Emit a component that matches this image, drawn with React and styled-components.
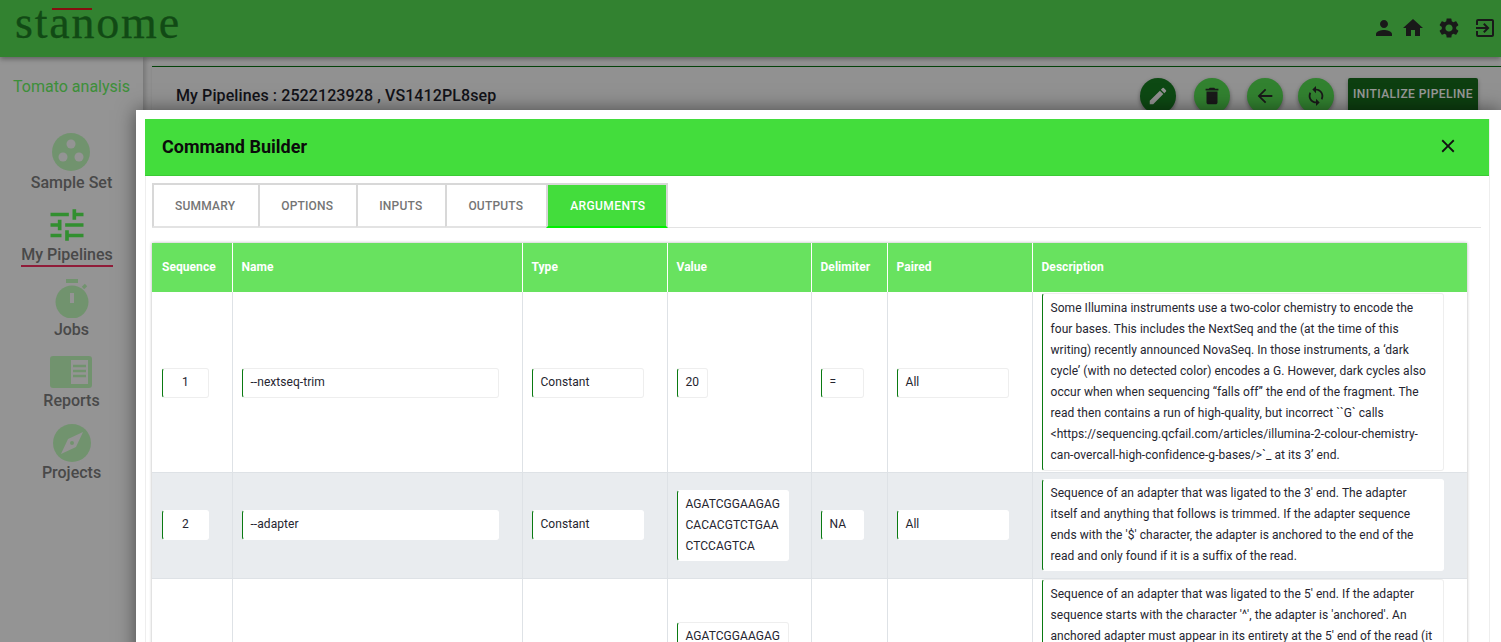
import React from 'react';
import styled, { createGlobalStyle } from 'styled-components';
import { MdPerson, MdHome, MdSettings, MdExitToApp, MdEdit, MdDelete, MdArrowBack, MdSync, MdClose } from 'react-icons/md';

const Global = createGlobalStyle`
  html, body { margin: 0; height: 642px; overflow: hidden; background: #f7f7f7; }
  body { font-family: Roboto, "Liberation Sans", sans-serif; color: #212529; }
  * { box-sizing: border-box; }
`;

const Page = styled.div`position: relative; width: 1501px; height: 642px; overflow: hidden;`;
const TopBar = styled.header`
  height: 57px; background: #54d950; display: flex; align-items: flex-start; justify-content: space-between;
  box-shadow: 0 2px 5px rgba(0,0,0,.35); position: relative; z-index: 2;
`;
const Logo = styled.div`
  position: relative; margin: 0 0 0 15px; font-family: "Liberation Serif", serif; font-size: 46px; line-height: 46px;
  letter-spacing: 1.8px; color: #1d7c23; -webkit-text-stroke: .3px #1d7c23;
  &::after { content: ''; position: absolute; left: 37px; top: 8px; width: 40px; height: 2px; background: #e01c1c; }
`;
const TopIcons = styled.nav`display: flex; gap: 12px; padding: 16px 4px 0 0; color: #2b2b2b; font-size: 24px; svg { display: block; }`;
const Person = styled(MdPerson)`margin-right: -7px;`;
const Body = styled.div`display: flex; height: 585px;`;
const Side = styled.aside`
  width: 143px; flex: none; background: #f7f7f7; box-shadow: 2px 0 6px rgba(0,0,0,.25); position: relative; z-index: 1;
  display: flex; flex-direction: column; align-items: center; padding-top: 20px;
`;
const Project = styled.div`font-size: 16px; line-height: 20px; color: #66ee60; margin-bottom: 36px;`;
const NavItem = styled.div`
  display: flex; flex-direction: column; align-items: center; font-size: 16px; font-weight: 500; line-height: 19px;
  color: #7a7a7a; margin-bottom: ${p => p.$mb}px; margin-right: ${p => p.$shift || 0}px;
  svg { display: block; }
`;
const NavLabel = styled.span`
  margin-top: ${p => p.$mt || 0}px; padding-bottom: 1px;
  border-bottom: ${p => p.$active ? '2px solid #f0305f' : '0'};
`;
const Main = styled.main`flex: 1; padding: 9px 0 0 9px;`;
const Card = styled.section`
  border-top: 1px solid #067010; height: 500px; background: #f2f2f2; box-shadow: 0 0 4px rgba(0,0,0,.12);
  display: flex; justify-content: space-between; padding: 11px 23px 0 24px;
`;
const CardTitle = styled.h2`margin: 8px 0 0; font-size: 16px; line-height: 20px; font-weight: 500; letter-spacing: .1px; color: #1e1e2a;`;
const CardActions = styled.div`display: flex; align-items: flex-start;`;
const Round = styled.button`
  width: 36px; height: 36px; padding: 0; border: 0; border-radius: 50%; margin-right: ${p => p.$mr}px;
  background: ${p => p.$dark ? '#167a20' : '#54d950'}; color: ${p => p.$dark ? '#f2f2f2' : '#2b2b2b'};
  display: flex; align-items: center; justify-content: center; font-size: 22px;
  box-shadow: 0 2px 4px rgba(0,0,0,.4);
`;
const InitButton = styled.button`
  width: 130px; height: 36px; border: 0; border-radius: 2px; padding: 0 0 5px; background: #166a1c; color: #fff;
  font: 500 12px Roboto, sans-serif; letter-spacing: .45px; box-shadow: 0 2px 4px rgba(0,0,0,.3);
`;
const Backdrop = styled.div`position: absolute; inset: 0; background: rgba(0,0,0,.4); z-index: 3;`;
const Modal = styled.div`
  position: absolute; z-index: 4; left: 136px; top: 110px; width: 1365px; height: 600px; background: #fff;
  padding: 9px 11px 0 9px; box-shadow: 0 0 18px rgba(0,0,0,.5);
`;
const Panel = styled.div`border-left: 1px solid #eee; border-right: 1px solid #eee; height: 100%;`;
const ModalHead = styled.div`
  height: 57px; margin-left: -1px; background: #43dd3c; border-bottom: 1px solid #3bc935; display: flex; align-items: center; justify-content: space-between;
  padding: 0 30px 0 17px; color: #111;
`;
const ModalTitle = styled.h1`margin: 0; font-size: 18px; font-weight: 700; line-height: 24px; color: #0b0b0b;`;
const CloseIcon = styled(MdClose)`margin-bottom: 2px;`;
const Content = styled.div`padding: 7px 8px 0 6px;`;
const Tabs = styled.div`display: flex; height: 45px; border-bottom: 1px solid #e3e3e3;`;
const Tab = styled.div`
  height: ${p => p.$active ? 45 : 44}px; padding: ${p => p.$active ? '0 21px 0 22px' : '0 23px 0 21px'}; font-size: 12px; font-weight: 500;
  letter-spacing: ${p => p.$active ? .4 : .2}px; display: flex; align-items: center;
  border: 2px solid #d8d8d8; border-bottom: ${p => p.$active ? '2px solid #00f000' : '1px solid #e3e3e3'}; border-right-width: 0;
  background: ${p => p.$active ? '#43dd3c' : '#fff'}; color: ${p => p.$active ? '#fff' : '#757575'};
  &:last-child { border-right-width: 2px; }
`;
const TableWrap = styled.div`margin-top: 15px; width: 1315px; box-shadow: 0 0 3px rgba(0,0,0,.3);`;
const Table = styled.table`border-collapse: collapse; table-layout: fixed; width: 1315px; font-size: 12px; line-height: 21px; letter-spacing: .055px;`;
const Col = styled.col`width: ${p => p.$w}px;`;
const Th = styled.th`
  height: 49px; background: #68e25f; color: #fff; font-weight: 700; text-align: left; padding: 0 9px;
  border-left: 1px solid #fff; &:first-child { border-left: 0; padding-left: 10px; }
`;
const Row = styled.tr`
  height: ${p => p.$h}px; background: ${p => p.$shade ? '#e9ecef' : '#fff'}; border-bottom: 1px solid #dee2e6;
  td:not(:last-child) { padding-top: ${p => p.$top || 0}px; }
`;
const Td = styled.td`padding: 0 9px; vertical-align: middle; border-left: 1px solid #dee2e6; &:first-child { border-left: 0; padding-left: 10px; }`;
const Field = styled.div`
  width: ${p => p.$w}px; min-height: 30px; padding: 3px ${p => p.$break ? 5 : 8}px 3px 8px; background: #fff; border: 1px solid ${p => p.$flat ? '#fff' : '#eee'}; border-left: 1px solid #0a7a12;
  border-radius: 3px; text-align: ${p => p.$center ? 'center' : 'left'}; color: #25252f; word-break: ${p => p.$break ? 'break-all' : 'normal'};
`;
const Desc = styled(Field)`padding: ${p => p.$py}px 10px ${p => p.$py}px 8px;`;

const green = '#bdf5b8';
const SampleIcon = () => (
  <svg width="38" height="38" viewBox="0 0 38 38"><circle cx="19" cy="19" r="19" fill={green}/><circle cx="19" cy="11" r="4.5" fill="#f7f7f7"/><circle cx="11" cy="24" r="4.5" fill="#f7f7f7"/><circle cx="27" cy="24" r="4.5" fill="#f7f7f7"/></svg>
);
const TuneIcon = () => (
  <svg width="44" height="42" viewBox="0 0 24 24" preserveAspectRatio="none" fill="#54ee50"><path d="M3 17v2h6v-2H3zM3 5v2h10V5H3zm10 16v-2h8v-2h-8v-2h-2v6h2zM7 9v2H3v2h4v2h2V9H7zm14 4v-2H11v2h10zm-6-4h2V7h4V5h-4V3h-2v6z"/></svg>
);
const WatchIcon = () => (
  <svg width="38" height="39" viewBox="0 0 38 39"><rect x="13" y="0" width="12" height="4" fill={green}/><path d="M30 9l3-3" stroke={green} strokeWidth="3.4"/><circle cx="19" cy="23" r="16.5" fill={green}/><rect x="17" y="14" width="4" height="10" fill="#f7f7f7"/></svg>
);
const ReportIcon = () => (
  <svg width="42" height="32" viewBox="0 0 42 32"><rect width="42" height="32" rx="3" fill={green}/><rect x="21" y="4" width="17" height="24" fill="#f7f7f7"/><path d="M23 10h13M23 15h13M23 20h13" stroke={green} strokeWidth="2.6"/></svg>
);
const CompassIcon = () => (
  <svg width="38" height="38" viewBox="0 0 38 38"><circle cx="19" cy="19" r="19" fill={green}/><path d="M30 8L23 23 8 30l7-15z" fill="#f7f7f7"/><circle cx="19" cy="19" r="2" fill={green}/></svg>
);

const heads = ['Sequence','Name','Type','Value','Delimiter','Paired','Description'];
const widths = [80,290,145,144,76,145,435];

const adapter = 'AGATCGGAAGAGCACACGTCTGAACTCCAGTCA';

export default function App() {
  return (
    <Page>
      <Global />
      <TopBar>
        <Logo>stanome</Logo>
        <TopIcons><Person /><MdHome /><MdSettings /><MdExitToApp /></TopIcons>
      </TopBar>
      <Body>
        <Side>
          <Project>Tomato analysis</Project>
          <NavItem $mb={11}><SampleIcon /><NavLabel $mt={2}>Sample Set</NavLabel></NavItem>
          <NavItem $mb={12} $shift={9}><TuneIcon /><NavLabel $mt={-1} $active>My Pipelines</NavLabel></NavItem>
          <NavItem $mb={16}><WatchIcon /><NavLabel $mt={2}>Jobs</NavLabel></NavItem>
          <NavItem $mb={13}><ReportIcon /><NavLabel $mt={3}>Reports</NavLabel></NavItem>
          <NavItem $mb={0}><CompassIcon /><NavLabel $mt={1}>Projects</NavLabel></NavItem>
        </Side>
        <Main>
          <Card>
            <CardTitle>My Pipelines : 2522123928 , VS1412PL8sep</CardTitle>
            <CardActions>
              <Round $dark $mr={18}><MdEdit /></Round>
              <Round $mr={17}><MdDelete /></Round>
              <Round $mr={15}><MdArrowBack /></Round>
              <Round $mr={14}><MdSync /></Round>
              <InitButton>INITIALIZE PIPELINE</InitButton>
            </CardActions>
          </Card>
        </Main>
      </Body>
      <Backdrop />
      <Modal>
        <Panel>
          <ModalHead>
            <ModalTitle>Command Builder</ModalTitle>
            <CloseIcon size={22} />
          </ModalHead>
          <Content>
            <Tabs>
              <Tab>SUMMARY</Tab><Tab>OPTIONS</Tab><Tab>INPUTS</Tab><Tab>OUTPUTS</Tab><Tab $active>ARGUMENTS</Tab>
            </Tabs>
            <TableWrap>
              <Table>
                <colgroup>{widths.map((w, i) => <Col key={i} $w={w} />)}</colgroup>
                <thead><tr>{heads.map(h => <Th key={h}>{h}</Th>)}</tr></thead>
                <tbody>
                  <Row $h={180} $top={2}>
                    <Td><Field $w={47} $center>1</Field></Td>
                    <Td><Field $w={257}>--nextseq-trim</Field></Td>
                    <Td><Field $w={112}>Constant</Field></Td>
                    <Td><Field $w={31}>20</Field></Td>
                    <Td><Field $w={43}>=</Field></Td>
                    <Td><Field $w={112}>All</Field></Td>
                    <Td><Desc $w={402} $py={4}>Some Illumina instruments use a two-color chemistry to encode the four bases. This includes the NextSeq and the (at the time of this writing) recently announced NovaSeq. In those instruments, a ‘dark cycle’ (with no detected color) encodes a G. However, dark cycles also occur when when sequencing “falls off” the end of the fragment. The read then contains a run of high-quality, but incorrect ``G` calls &lt;https://sequencing.qcfail.com/articles/illumina-2-colour-chemistry-can-overcall-high-confidence-g-bases/&gt;`_ at its 3’ end.</Desc></Td>
                  </Row>
                  <Row $h={106} $shade>
                    <Td><Field $w={47} $center $flat>2</Field></Td>
                    <Td><Field $w={257} $flat>--adapter</Field></Td>
                    <Td><Field $w={112} $flat>Constant</Field></Td>
                    <Td><Field $w={112} $flat $break>{adapter}</Field></Td>
                    <Td><Field $w={43} $flat>NA</Field></Td>
                    <Td><Field $w={112} $flat>All</Field></Td>
                    <Td><Desc $w={402} $py={3} $flat>Sequence of an adapter that was ligated to the 3' end. The adapter itself and anything that follows is trimmed. If the adapter sequence ends with the '$' character, the adapter is anchored to the end of the read and only found if it is a suffix of the read.</Desc></Td>
                  </Row>
                  <Row>
                    <Td><Field $w={47} $center>3</Field></Td>
                    <Td><Field $w={257}>--front</Field></Td>
                    <Td><Field $w={112}>Constant</Field></Td>
                    <Td><Field $w={112} $break>{adapter}</Field></Td>
                    <Td><Field $w={43}>NA</Field></Td>
                    <Td><Field $w={112}>All</Field></Td>
                    <Td><Desc $w={402} $py={4}>Sequence of an adapter that was ligated to the 5' end. If the adapter sequence starts with the character '^', the adapter is 'anchored'. An anchored adapter must appear in its entirety at the 5' end of the read (it is a prefix of the read). A non-anchored adapter may appear partially at the 5' end, or it may occur within the read. If it is found within a read, the sequence preceding the adapter is also trimmed. The adapter sequence may contain IUPAC wildcards.</Desc></Td>
                  </Row>
                </tbody>
              </Table>
            </TableWrap>
          </Content>
        </Panel>
      </Modal>
    </Page>
  );
}
